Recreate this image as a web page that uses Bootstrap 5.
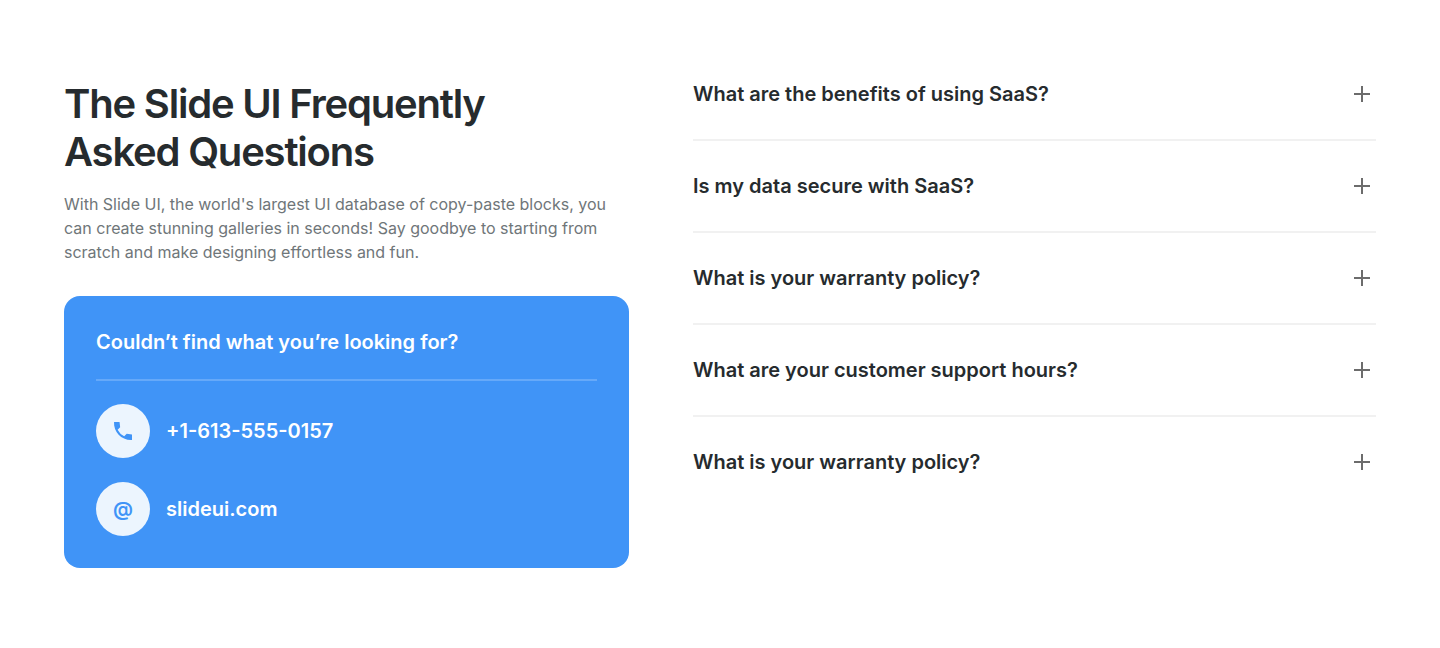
<!DOCTYPE html>
<html lang="en">
<head>
<meta charset="utf-8">
<meta name="viewport" content="width=device-width, initial-scale=1">
<title>Slide UI – Frequently Asked Questions</title>
<link href="https://cdn.jsdelivr.net/npm/bootstrap@5.3.0/dist/css/bootstrap.min.css" rel="stylesheet">
<style>
  body { font-family: Inter, "Liberation Sans", sans-serif; color: #262b2e; background: #fff; }
  .faq { padding: 80px 64px; }
  .faq-grid { display: grid; gap: 64px; grid-template-columns: minmax(0, 565fr) minmax(0, 683fr); }
  .faq-title { font-size: 40px; line-height: 48px; font-weight: 600; letter-spacing: -0.03em; max-width: 480px; margin-bottom: 16px; }
  .faq-lead { font-size: 16px; line-height: 24px; color: #6f7679; margin-bottom: 32px; }
  .contact { background: #4094f7; color: #fff; border-radius: 16px; padding: 32px; }
  .contact-title, .contact-link, .faq-question { font-size: 20px; line-height: 28px; font-weight: 600; }
  .contact-title { padding-bottom: 23px; margin-bottom: 23px; border-bottom: 2px solid #66a9f9; }
  .contact-link { color: #fff; text-decoration: none; }
  .contact-icon { width: 54px; height: 54px; background: #ecf5fe; color: #4094f7; }
  .faq-item + .faq-item { border-top: 2px solid #f1f1f1; }
  .faq-question { padding: 31px 0; color: inherit; background: none; border: 0; }
  .faq-item:first-child .faq-question { padding-top: 0; }
  .faq-plus { width: 28px; height: 28px; color: #6c6c6c; }
  @media (max-width: 991px) { .faq { padding: 40px 24px; } .faq-grid { grid-template-columns: minmax(0, 1fr); } }
</style>
</head>
<body>
<svg class="d-none" aria-hidden="true">
  <symbol id="plus" viewBox="0 0 28 28"><path d="M14 6v16M6 14h16" stroke="currentColor" stroke-width="2" fill="none"/></symbol>
</svg>
<main class="faq faq-grid">
  <section>
    <h1 class="faq-title">The Slide UI Frequently Asked Questions</h1>
    <p class="faq-lead">With Slide UI, the world's largest UI database of copy-paste blocks, you can create stunning galleries in seconds! Say goodbye to starting from scratch and make designing effortless and fun.</p>
    <div class="contact">
      <h2 class="contact-title">Couldn’t find what you’re looking for?</h2>
      <div class="d-flex flex-column gap-4">
        <a class="contact-link d-flex align-items-center gap-3" href="tel:+16135550157">
          <span class="contact-icon rounded-circle d-flex align-items-center justify-content-center"><svg width="24" height="24" viewBox="0 0 24 24" fill="currentColor" aria-hidden="true"><path d="M21 15.46l-5.27-.61-2.52 2.52a15.045 15.045 0 0 1-6.59-6.59l2.530-2.530L8.540 3H3.030C2.450 13.180 10.820 21.550 21 20.970z"/></svg></span>
          <span>+1-613-555-0157</span>
        </a>
        <a class="contact-link d-flex align-items-center gap-3" href="https://slideui.com">
          <span class="contact-icon rounded-circle d-flex align-items-center justify-content-center" aria-hidden="true">@</span>
          <span>slideui.com</span>
        </a>
      </div>
    </div>
  </section>
  <section aria-label="Questions">
    <div class="faq-item"><button type="button" class="faq-question w-100 d-flex justify-content-between align-items-center text-start" aria-expanded="false"><span>What are the benefits of using SaaS?</span><svg class="faq-plus flex-shrink-0" aria-hidden="true"><use href="#plus"/></svg></button></div>
    <div class="faq-item"><button type="button" class="faq-question w-100 d-flex justify-content-between align-items-center text-start" aria-expanded="false"><span>Is my data secure with SaaS?</span><svg class="faq-plus flex-shrink-0" aria-hidden="true"><use href="#plus"/></svg></button></div>
    <div class="faq-item"><button type="button" class="faq-question w-100 d-flex justify-content-between align-items-center text-start" aria-expanded="false"><span>What is your warranty policy?</span><svg class="faq-plus flex-shrink-0" aria-hidden="true"><use href="#plus"/></svg></button></div>
    <div class="faq-item"><button type="button" class="faq-question w-100 d-flex justify-content-between align-items-center text-start" aria-expanded="false"><span>What are your customer support hours?</span><svg class="faq-plus flex-shrink-0" aria-hidden="true"><use href="#plus"/></svg></button></div>
    <div class="faq-item"><button type="button" class="faq-question w-100 d-flex justify-content-between align-items-center text-start" aria-expanded="false"><span>What is your warranty policy?</span><svg class="faq-plus flex-shrink-0" aria-hidden="true"><use href="#plus"/></svg></button></div>
  </section>
</main>
<script src="https://cdn.jsdelivr.net/npm/bootstrap@5.3.0/dist/js/bootstrap.bundle.min.js"></script>
</body>
</html>
